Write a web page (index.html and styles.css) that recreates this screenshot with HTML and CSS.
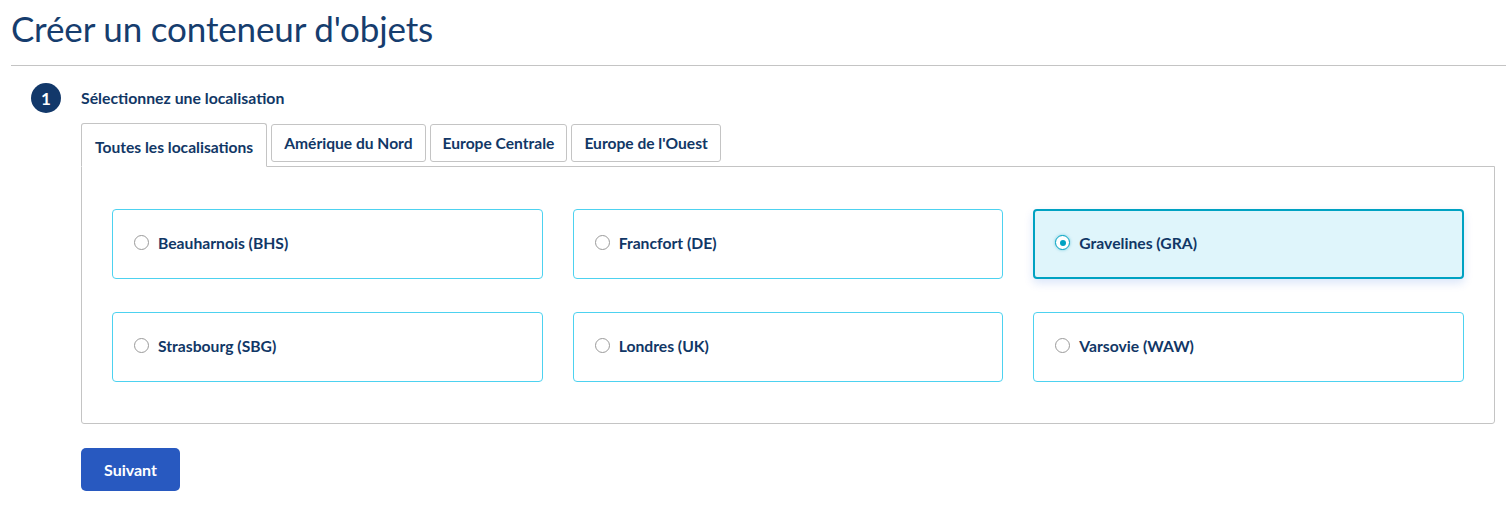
FILE: index.html
```html
<!DOCTYPE html>
<html lang="fr">
<head>
<meta charset="utf-8">
<title>Créer un conteneur d'objets</title>
<link rel="stylesheet" href="styles.css">
</head>
<body>
<main class="page">
  <h1 class="title">Créer un conteneur d'objets</h1>
  <hr class="divider">
  <section class="step">
    <div class="step-badge">1</div>
    <div class="step-body">
      <h2 class="step-title">Sélectionnez une localisation</h2>
      <div class="tabs">
        <button class="tab tab-active">Toutes les localisations</button>
        <button class="tab">Amérique du Nord</button>
        <button class="tab">Europe Centrale</button>
        <button class="tab">Europe de l'Ouest</button>
      </div>
      <div class="panel">
        <div class="grid">
          <label class="card"><span class="radio"></span><span class="card-label">Beauharnois (BHS)</span></label>
          <label class="card"><span class="radio"></span><span class="card-label">Francfort (DE)</span></label>
          <label class="card card-selected"><span class="radio radio-checked"></span><span class="card-label">Gravelines (GRA)</span></label>
          <label class="card"><span class="radio"></span><span class="card-label">Strasbourg (SBG)</span></label>
          <label class="card"><span class="radio"></span><span class="card-label">Londres (UK)</span></label>
          <label class="card"><span class="radio"></span><span class="card-label">Varsovie (WAW)</span></label>
        </div>
      </div>
      <button class="btn-primary">Suivant</button>
    </div>
  </section>
</main>
</body>
</html>
```

FILE: styles.css
```css
* { box-sizing: border-box; }
html, body { margin: 0; padding: 0; background: #fff; }
body {
  font-family: "Lato", "Liberation Sans", sans-serif;
  color: #113766;
}
.page {
  padding-left: 11px;
}
.title {
  margin: 0;
  padding-top: 8px;
  font-size: 35px;
  line-height: 41px;
  font-weight: 400;
  color: #163d6e;
  letter-spacing: -0.15px;
}
.divider {
  margin: 16px 0 0 0;
  border: 0;
  border-top: 1px solid #c4c4c4;
  height: 0;
}
.step {
  display: flex;
  gap: 20px;
  padding: 17px 11px 0 20px;
}
.step-badge {
  flex: none;
  width: 30px;
  height: 30px;
  border-radius: 50%;
  background: #12386a;
  color: #fff;
  font-weight: 700;
  font-size: 17px;
  display: flex;
  align-items: center;
  justify-content: center;
}
.step-body {
  flex: 1;
  display: flex;
  flex-direction: column;
  align-items: flex-start;
}
.step-title {
  margin: 0;
  font-size: 15.8px;
  line-height: 30px;
  font-weight: 700;
  color: #113766;
}
.tabs {
  display: flex;
  align-items: flex-start;
  gap: 4px;
  margin-top: 10px;
  position: relative;
  z-index: 1;
  margin-bottom: -1px;
}
.tab {
  font-family: inherit;
  font-size: 15.6px;
  font-weight: 700;
  color: #113766;
  background: #fff;
  border: 1px solid #c4c4c4;
  border-radius: 3px;
  height: 38px;
  margin-top: 1px;
  padding: 0 12px;
  cursor: pointer;
}
.tab-active {
  height: 44px;
  margin-top: 0;
  padding: 3px 13px 0 13px;
  border-bottom-color: #fff;
  border-radius: 3px 3px 0 0;
}
.panel {
  align-self: stretch;
  border: 1px solid #c4c4c4;
  border-radius: 0 0 3px 3px;
  padding: 42px 30px 41px 30px;
}
.grid {
  display: grid;
  grid-template-columns: repeat(3, 1fr);
  column-gap: 30px;
  row-gap: 33px;
}
.card {
  height: 70px;
  border: 1px solid #4dd2f0;
  border-radius: 4px;
  display: flex;
  align-items: center;
  padding-left: 21px;
  padding-bottom: 3px;
  gap: 9px;
  background: #fff;
  cursor: pointer;
}
.card-selected {
  border: 2px solid #00a2c2;
  background: #dff5fb;
  padding-left: 20px;
  box-shadow: 0 4px 10px rgba(0, 80, 215, 0.15);
}
.radio {
  width: 15px;
  height: 15px;
  border-radius: 50%;
  border: 1px solid #9a9a9a;
  background: #fff;
  flex: none;
  position: relative;
}
.radio-checked {
  border: 1.5px solid #00a2c2;
  box-shadow: 0 0 3px rgba(0, 162, 194, 0.5);
}
.radio-checked::after {
  content: "";
  position: absolute;
  left: 50%;
  top: 50%;
  width: 6px;
  height: 6px;
  margin: -3px 0 0 -3px;
  border-radius: 50%;
  background: #00a2c2;
}
.card-label {
  font-size: 15.7px;
  font-weight: 700;
  color: #113766;
}
.btn-primary {
  margin-top: 24px;
  width: 99px;
  height: 43px;
  border: 0;
  border-radius: 5px;
  background: #2859c0;
  color: #fff;
  font-family: inherit;
  font-size: 16px;
  font-weight: 700;
  cursor: pointer;
}
```
